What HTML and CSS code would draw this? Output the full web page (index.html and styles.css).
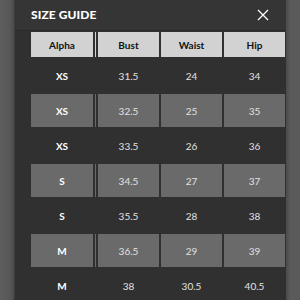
FILE: index.html
```html
<!DOCTYPE html>
<html>
<head>
<meta charset="utf-8">
<link rel="stylesheet" href="styles.css">
</head>
<body>
<div class="modal">
  <div class="topbar">
    <span class="title">SIZE GUIDE</span>
    <svg class="close" width="12" height="12" viewBox="0 0 12 12"><path d="M1 1L11 11M11 1L1 11" stroke="#fff" stroke-width="1.3" fill="none"/></svg>
  </div>
  <div class="table">
    <div class="row head"><div class="c a">Alpha</div><div class="sep"></div><div class="c">Bust</div><div class="c">Waist</div><div class="c">Hip</div></div>
    <div class="row dark"><div class="c a">XS</div><div class="sep"></div><div class="c">31.5</div><div class="c">24</div><div class="c">34</div></div>
    <div class="row grey"><div class="c a">XS</div><div class="sep"></div><div class="c">32.5</div><div class="c">25</div><div class="c">35</div></div>
    <div class="row dark"><div class="c a">XS</div><div class="sep"></div><div class="c">33.5</div><div class="c">26</div><div class="c">36</div></div>
    <div class="row grey"><div class="c a">S</div><div class="sep"></div><div class="c">34.5</div><div class="c">27</div><div class="c">37</div></div>
    <div class="row dark"><div class="c a">S</div><div class="sep"></div><div class="c">35.5</div><div class="c">28</div><div class="c">38</div></div>
    <div class="row grey"><div class="c a">M</div><div class="sep"></div><div class="c">36.5</div><div class="c">29</div><div class="c">39</div></div>
    <div class="row dark"><div class="c a">M</div><div class="sep"></div><div class="c">38</div><div class="c">30.5</div><div class="c">40.5</div></div>
  </div>
</div>
</body>
</html>
```
FILE: styles.css
```css
html, body {
  margin: 0;
  padding: 0;
  height: 300px;
  overflow: hidden;
}
body {
  background: linear-gradient(90deg, #5e5e5e 0, #575757 10px, #4a4a4a 14px, #4a4a4a 286px, #5a5a5a 290px, #5a5a5a 100%);
  font-family: Lato, "Open Sans", sans-serif;
}
.modal {
  margin: 0 14px;
  height: 300px;
  background: #303030;
  border-left: 1px solid #3c3c3c;
}
.topbar {
  height: 31px;
  background: #353535;
  border-bottom: 1px solid #2a2a2a;
  box-sizing: border-box;
  display: flex;
  align-items: center;
  justify-content: space-between;
  padding: 0 17px 1px 16px;
}
.title {
  color: #fff;
  font-weight: 900;
  font-size: 12px;
  letter-spacing: 0.1px;
}
.close {
  display: block;
}
.table {
  padding-left: 16px;
  padding-top: 1px;
}
.row {
  display: grid;
  grid-template-columns: 62px 1px 61px 61px 61px;
  column-gap: 2px;
  height: 35px;
}
.row.head {
  height: 26px;
}
.c {
  display: flex;
  align-items: center;
  justify-content: center;
  font-size: 10px;
  color: #e2e2e2;
}
.c.a {
  font-weight: 700;
  color: #fff;
}
.head .c, .head .sep {
  background: #d2d2d2;
  color: #111;
  font-weight: 700;
  margin: 0 0 1px;
}
.grey .c, .grey .sep {
  background: #6a6a6a;
  margin: 1px 0;
}
```
